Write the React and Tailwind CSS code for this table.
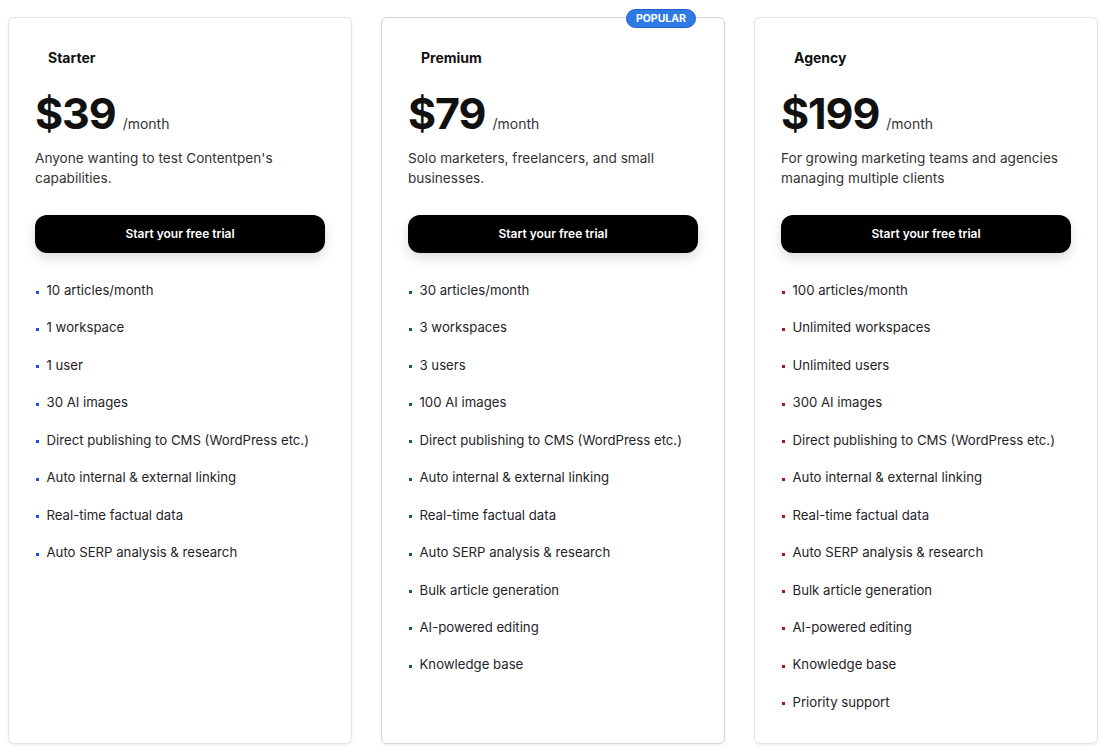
import React from 'react';

// Plans de tarification
const PLANS = [
  {
    name: 'Starter',
    price: '$39',
    description: "Anyone wanting to test Contentpen's capabilities.",
    dot: 'bg-[#1d4ed8]',
    border: 'border-[#e5e5e5]',
    features: [
      '10 articles/month',
      '1 workspace',
      '1 user',
      '30 AI images',
      'Direct publishing to CMS (WordPress etc.)',
      'Auto internal & external linking',
      'Real-time factual data',
      'Auto SERP analysis & research',
    ],
  },
  {
    name: 'Premium',
    price: '$79',
    description: 'Solo marketers, freelancers, and small businesses.',
    dot: 'bg-[#166534]',
    border: 'border-[#d4d4d4]',
    popular: true,
    features: [
      '30 articles/month',
      '3 workspaces',
      '3 users',
      '100 AI images',
      'Direct publishing to CMS (WordPress etc.)',
      'Auto internal & external linking',
      'Real-time factual data',
      'Auto SERP analysis & research',
      'Bulk article generation',
      'AI-powered editing',
      'Knowledge base',
    ],
  },
  {
    name: 'Agency',
    price: '$199',
    description: 'For growing marketing teams and agencies managing multiple clients',
    dot: 'bg-[#991b1b]',
    border: 'border-[#e5e5e5]',
    features: [
      '100 articles/month',
      'Unlimited workspaces',
      'Unlimited users',
      '300 AI images',
      'Direct publishing to CMS (WordPress etc.)',
      'Auto internal & external linking',
      'Real-time factual data',
      'Auto SERP analysis & research',
      'Bulk article generation',
      'AI-powered editing',
      'Knowledge base',
      'Priority support',
    ],
  },
];

const PlanCard = ({ plan }) => (
  <div className={`relative bg-white border ${plan.border} rounded-md shadow-[0_1px_3px_rgba(0,0,0,0.08)] px-[26px] pt-[30px] pb-6`}>
    {plan.popular && (
      <span className="absolute -top-[9px] right-[28px] rounded-full bg-[#2f7be6] border border-[#1f5fc4] px-[9px] h-[19px] flex items-center text-[10.5px] font-bold text-white">
        POPULAR
      </span>
    )}
    <h3 className="pl-[13px] text-[14px] leading-5 font-bold text-[#111]">{plan.name}</h3>
    <div className="mt-[23px] flex items-baseline gap-[7px]">
      <span className="text-[43px] leading-[44px] font-bold text-[#111] tracking-tight">{plan.price}</span>
      <span className="text-[14px] text-[#333]">/month</span>
    </div>
    <p className="mt-[13px] text-[13.6px] leading-5 text-[#333]">{plan.description}</p>
    <button className="mt-[27px] w-full h-[38px] rounded-xl bg-black text-white text-[12px] font-semibold shadow-[0_5px_12px_rgba(0,0,0,0.14)]">
      Start your free trial
    </button>
    <ul className="mt-[27px] flex flex-col gap-[17.45px]">
      {plan.features.map((f, i) => (
        <li key={i} className="flex items-center text-[13.2px] leading-5 text-[#1f2328]">
          <span className={`w-[2.5px] h-[3px] mt-[4px] mr-[8px] ml-[1px] ${plan.dot}`} />
          {f}
        </li>
      ))}
    </ul>
  </div>
);

export default function App() {
  return (
    <div className="min-h-screen bg-white pl-2 pr-[10px] pt-[17px] pb-[7px]" style={{ fontFamily: 'Inter, "Noto Sans", sans-serif' }}>
      <div className="grid grid-cols-3 gap-[29px] h-[727px]">
        {PLANS.map((plan) => (
          <PlanCard key={plan.name} plan={plan} />
        ))}
      </div>
    </div>
  );
}
